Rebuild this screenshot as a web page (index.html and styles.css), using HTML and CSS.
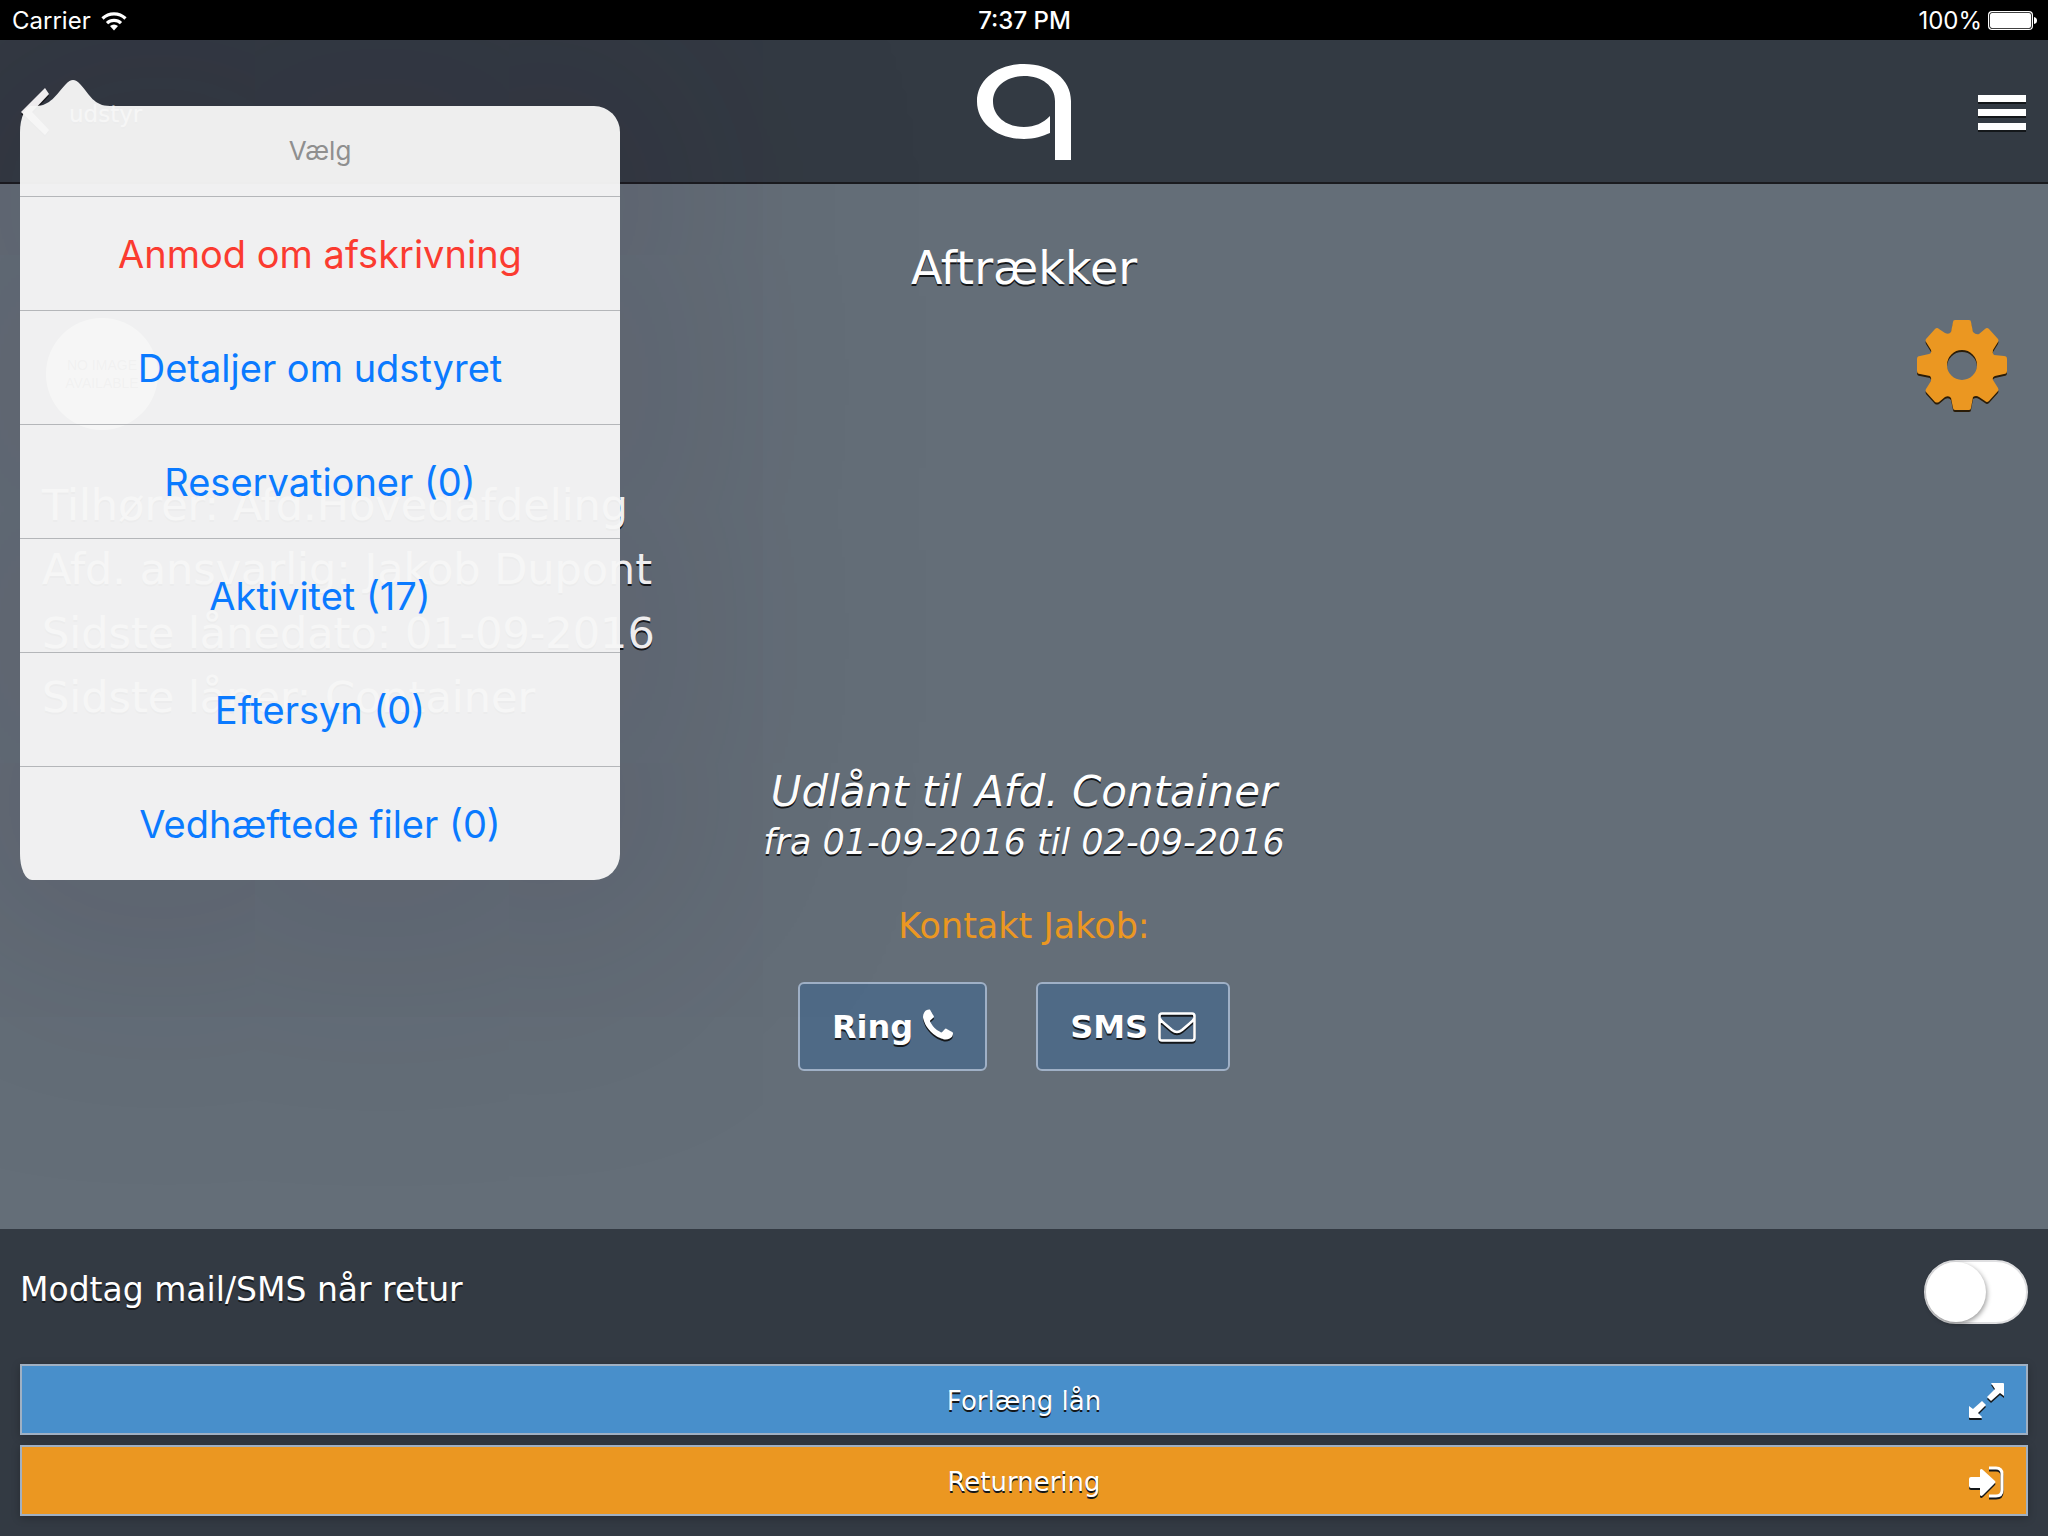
FILE: index.html
```html
<!DOCTYPE html>
<html lang="da">
<head>
<meta charset="utf-8">
<meta name="viewport" content="width=device-width, initial-scale=1">
<title>Aftrækker</title>
<link rel="stylesheet" href="styles.css">
</head>
<body>
<div class="statusbar">
  <div class="status-left">
    <span>Carrier</span>
    <svg class="wifi" viewBox="0 0 26 20" aria-hidden="true">
      <path d="M1.500 7.500A16.500 16.500 0 0 1 24.500 7.500M6 12.200A10 10 0 0 1 20 12.200" fill="none" stroke="#fff" stroke-width="3.200"/>
      <path d="M9 15a6 6 0 0 1 8 0l-4 4.500z" fill="#fff"/>
    </svg>
  </div>
  <time class="clock">7:37 PM</time>
  <div class="status-right">
    <span>100%</span>
    <svg class="battery" viewBox="0 0 49 19" aria-hidden="true">
      <rect x=".6" y=".6" width="43.800" height="17.800" rx="3.500" fill="none" stroke="#fff" stroke-width="1.200"/>
      <rect x="2" y="2" width="41" height="15" rx="2" fill="#fff"/>
      <path d="M46 6q3 .5 3 3.500t-3 3.500z" fill="#fff"/>
    </svg>
  </div>
</div>

<header class="topbar">
  <a class="back" href="#">
    <svg class="chevron" viewBox="0 0 28 48" aria-hidden="true"><path d="M24 0L28 6 11 24 28 42 24 47 0 24z" fill="#fff"/></svg>
    <span>udstyr</span>
  </a>
  <svg class="logo" viewBox="0 0 94 96" role="img" aria-label="Logo">
    <path d="M94 96H78V37C78 22 65 12 47 12S16 23 16 37.500 29 63 47 63C58 63 66 59 73 52V69C66 72 57 75 47 75C20 75 0 59 0 37.500S20 0 47 0 94 15 94 37z" fill="#fff"/>
  </svg>
  <button class="menu" type="button" aria-label="Menu"><i></i><i></i><i></i></button>
</header>

<main class="content">
  <h1>Aftrækker</h1>
  <div class="media">
    <div class="thumb">NO IMAGE<br>AVAILABLE</div>
    <button class="gear" type="button" aria-label="Indstillinger">
      <svg viewBox="0 0 90 92" aria-hidden="true">
        <path fill-rule="evenodd" d="M38 0H52Q54 0 54 2L56 12Q59 15 62 14L68 9Q70 7 72 9L81 19Q82 20 81 22L76 30Q75 33 77 35L87 36Q90 36 90 39V51Q90 54 87 54L78 56Q75 57 76 60L81 68Q82 70 81 71L72 81Q70 83 68 81L62 77Q59 75 56 77L54 88Q54 90 52 90H38Q36 90 36 88L34 78Q32 75 28 77L22 82Q20 83 18 82L9 72Q8 70 9 69L14 61Q15 58 13 56L3 54Q0 54 0 51V39Q0 36 3 36L12 34Q15 33 14 30L9 22Q8 20 9 19L18 9Q20 7 22 9L28 13Q32 15 34 12L36 2Q36 0 38 0ZM45 30a15 15 0 1 0 0 30a15 15 0 1 0 0-30z"/>
      </svg>
    </button>
  </div>
  <div class="details">
    <p>Tilhører: Afd.Hovedafdeling</p>
    <p>Afd. ansvarlig: Jakob Dupont</p>
    <p>Sidste lånedato: 01-09-2016</p>
    <p>Sidste låner: Container</p>
  </div>
  <div class="loan">
    <p class="loan-to">Udlånt til Afd. Container</p>
    <p class="loan-dates">fra 01-09-2016 til 02-09-2016</p>
  </div>
  <p class="contact-title">Kontakt Jakob:</p>
  <div class="contact">
    <button type="button">Ring
      <svg class="phone" viewBox="192 256 1408 1408" aria-hidden="true"><path d="M1600 1368q0 27-10 70.500t-21 68.500q-21 50-122 106-94 51-186 51-27 0-53-3.500t-57.500-12.500-47-14.500-55.500-20.500-49-18q-98-35-175-83-127-79-264-216t-216-264q-48-77-83-175-3-9-18-49t-20.500-55.500-14.500-47-12.500-57.500-3.500-53q0-92 51-186 56-101 106-122 25-11 68.500-21t70.500-10q14 0 21 3 18 6 53 76 11 19 30 54t35 63.500 31 53.500q3 4 17.500 25t21.500 35.500 7 28.500q0 20-28.500 50t-62 55-62 53-28.500 46q0 9 5 22.500t8.500 20.500 14 24 11.500 19q76 137 174 235t235 174q2 1 19 11.500t24 14 20.500 8.500 22.500 5q18 0 46-28.500t53-62 55-62 50-28.500q14 0 28.500 7t35.500 21.500 25 17.500q25 15 53.500 31t63.500 35 54 30q70 35 76 53 3 7 3 21z" fill="#fff"/></svg>
    </button>
    <button type="button">SMS
      <svg class="mail" viewBox="0 0 38 30" aria-hidden="true"><path d="M4 1.500H34Q36.500 1.500 36.500 4V26Q36.500 28.500 34 28.500H4Q1.500 28.500 1.500 26V4Q1.500 1.500 4 1.500ZM1.500 6Q3 9 7 12L14 18Q19 22 24 18L31 12Q35 9 36.500 6" fill="none" stroke="#fff" stroke-width="2.600"/></svg>
    </button>
  </div>
</main>

<footer class="bottom">
  <div class="notify">
    <label for="notify">Modtag mail/SMS når retur</label>
    <input class="toggle" type="checkbox" id="notify">
  </div>
  <button class="action extend" type="button"><span>Forlæng lån</span>
    <svg viewBox="0 0 36 36" aria-hidden="true"><path d="M22 0H34Q35 0 35 1V13L31 10 22 18 18 14 26 6ZM13 18L17 22 9 30 13 34Q13 35 12 35H1Q0 35 0 34V23L4 26Z" fill="#fff"/></svg>
  </button>
  <button class="action return" type="button"><span>Returnering</span>
    <svg viewBox="0 0 36 36" aria-hidden="true"><path d="M0 15Q0 13 2 13H11V6Q12 4 14 6L26 17Q27 18 26 19L14 31Q12 33 11 31V24H2Q0 24 0 22Z" fill="#fff"/><path d="M20 4H27Q33 4 33 10V26Q33 32 27 32H20" fill="none" stroke="#fff" stroke-width="3"/></svg>
  </button>
</footer>

<div class="popover" role="dialog" aria-labelledby="sheet-title">
  <svg class="arrow" viewBox="0 0 74 26" aria-hidden="true"><path d="M0 26C14 26 20 15 30 4Q37-4 44 4C54 15 58 26 74 26z"/></svg>
  <h2 id="sheet-title">Vælg</h2>
  <button class="danger" type="button">Anmod om afskrivning</button>
  <button type="button">Detaljer om udstyret</button>
  <button type="button">Reservationer (0)</button>
  <button type="button">Aktivitet (17)</button>
  <button type="button">Eftersyn (0)</button>
  <button type="button">Vedhæftede filer (0)</button>
</div>
</body>
</html>
```
FILE: styles.css
```css
* { box-sizing: border-box; }

body {
  margin: 0;
  min-height: 100vh;
  position: relative;
  overflow-x: hidden;
  display: flex;
  flex-direction: column;
  background: #646e78;
  color: #fff;
  font-family: "DejaVu Sans", Verdana, sans-serif;
  text-shadow: 0 2px 0 #14171a;
}

h1, h2, p { margin: 0; font-weight: normal; }

button {
  font: inherit;
  color: inherit;
  text-shadow: inherit;
  border: 0;
  padding: 0;
  background: none;
  cursor: pointer;
}

svg { display: block; }

/* Device status bar */
.statusbar {
  position: relative;
  z-index: 3;
  display: grid;
  grid-template-columns: 1fr auto 1fr;
  align-items: center;
  height: 40px;
  padding: 1px 11px 0 12px;
  background: #000;
  font: 24px/39px Inter, sans-serif;
  text-shadow: none;
}
.status-left, .status-right { display: flex; align-items: center; gap: 10px; }
.status-right { justify-content: flex-end; gap: 6px; }
.clock { font-weight: 500; }
.wifi { width: 26px; height: 20px; }
.battery { width: 49px; height: 19px; }

/* App header */
.topbar {
  display: grid;
  grid-template-columns: 1fr auto 1fr;
  align-items: center;
  height: 144px;
  padding: 2px 22px 0 21px;
  background: #333a43;
  border-bottom: 2px solid #1a1b1f;
}
.back {
  display: flex;
  align-items: center;
  gap: 20px;
  color: #fff;
  font-size: 23px;
  text-decoration: none;
}
.back span { padding-top: 4px; }
.chevron { width: 28px; height: 48px; filter: drop-shadow(0 2px 0 #14171a); }
.logo { width: 94px; height: 96px; }
.menu {
  justify-self: end;
  display: grid;
  gap: 7px;
  width: 48px;
}
.menu i { height: 7px; background: #fff; box-shadow: 0 2px 0 #14171a; }

/* Equipment */
.content {
  flex: 1;
  display: flex;
  flex-direction: column;
  padding-top: 54px;
  text-align: center;
}
h1 { font-size: 46px; line-height: 60px; }
.media {
  display: flex;
  justify-content: space-between;
  margin-top: 20px;
  padding: 0 41px 0 46px;
}
.thumb {
  display: grid;
  place-content: center;
  width: 112px;
  height: 112px;
  border-radius: 50%;
  background: #fff;
  color: #777;
  font: 14px/18px "Liberation Sans", sans-serif;
  text-shadow: none;
}
.gear { align-self: flex-start; margin-top: 2px; }
.gear svg { width: 90px; height: 92px; fill: #eb9721; filter: drop-shadow(0 2px 0 #2a1c08); }
.details {
  margin-top: 43px;
  padding: 0 42px;
  font-size: 43px;
  line-height: 64px;
  text-align: left;
}
.loan { margin-top: 35px; font-style: italic; }
.loan-to { font-size: 42px; line-height: 56px; }
.loan-dates { font-size: 35px; line-height: 44px; }
.contact-title {
  margin-top: 40px;
  color: #eb9721;
  font-size: 35px;
  line-height: 44px;
  text-shadow: none;
}
.contact {
  display: flex;
  justify-content: center;
  gap: 49px;
  margin-top: 34px;
  padding-right: 20px;
}
.contact button {
  display: flex;
  align-items: center;
  gap: 10px;
  height: 89px;
  padding: 0 32px;
  border: 2px solid #9fb0c6;
  border-radius: 6px;
  background: #4f6a86;
  font-size: 32px;
  font-weight: bold;
}
.contact svg, .action svg { filter: drop-shadow(0 2px 0 #14171a); }
.phone { width: 30px; height: 31px; margin-bottom: 4px; }
.mail { width: 38px; height: 30px; }

/* Bottom actions */
.bottom {
  display: flex;
  flex-direction: column;
  gap: 10px;
  padding: 31px 20px 20px;
  background: #333a43;
}
.notify {
  display: flex;
  align-items: center;
  justify-content: space-between;
  margin-bottom: 30px;
  font-size: 33px;
  line-height: 60px;
}
.notify label { padding-bottom: 4px; }
.toggle {
  appearance: none;
  width: 104px;
  height: 64px;
  margin: 0;
  border: 2px solid #dfdfe1;
  border-radius: 32px;
  background: #fff;
}
.toggle::before {
  content: "";
  display: block;
  width: 60px;
  height: 60px;
  border-radius: 50%;
  background: #fff;
  box-shadow: 1px 2px 5px rgba(0, 0, 0, .4);
}
.action {
  display: grid;
  grid-template-columns: 1fr auto 1fr;
  align-items: center;
  height: 71px;
  padding: 3px 21px 0;
  border: 2px solid #a0b0c2;
  box-shadow: 0 2px 8px rgba(0, 0, 0, .25);
  font-size: 26px;
}
.action span { grid-column: 2; }
.action svg { justify-self: end; width: 36px; height: 36px; }
.extend { background: #488fcb; }
.return { background: #eb9721; }

/* Action sheet anchored to the back link */
.popover {
  position: absolute;
  z-index: 2;
  top: 106px;
  left: 20px;
  width: 600px;
  border-radius: 12px 26px 26px 12px / 26px;
  background: rgba(246, 246, 246, .96);
  box-shadow: 0 0 240px 90px rgba(38, 22, 44, .13);
  font-family: Inter, sans-serif;
  text-align: center;
  text-shadow: none;
}
.arrow {
  position: absolute;
  left: 16px;
  bottom: 100%;
  width: 74px;
  height: 26px;
  fill: rgba(246, 246, 246, .96);
}
.popover h2 { color: #8f8f8f; font-size: 26px; line-height: 90px; }
.popover button {
  display: block;
  width: 100%;
  height: 114px;
  border-top: 1px solid #b4b6b9;
  color: #0a7aff;
  font-size: 38px;
}
.popover .danger { color: #fb3b30; }
```
